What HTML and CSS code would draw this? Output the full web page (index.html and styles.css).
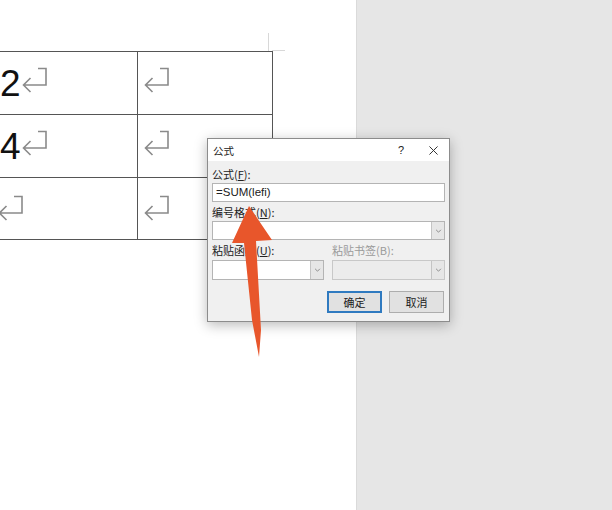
FILE: index.html
```html
<!DOCTYPE html>
<html lang="zh-CN">
<head>
  <meta charset="UTF-8">
  <title>公式</title>
  <link rel="stylesheet" href="styles.css">
</head>
<body>

  <div class="screen">
    <div class="doc">
      <div class="table-wrap">
        <table class="grid">
          <tr>
            <td class="col-a"><div class="cell"><span class="num">2</span><svg class="ret" viewBox="0 0 26 26"><path d="M16 1.5H24V18H1.5M8.5 11L1.5 18L8.5 25"/></svg></div></td>
            <td class="col-b"><div class="cell"><svg class="ret" viewBox="0 0 26 26"><path d="M16 1.5H24V18H1.5M8.5 11L1.5 18L8.5 25"/></svg></div></td>
          </tr>
          <tr>
            <td class="col-a"><div class="cell"><span class="num">4</span><svg class="ret" viewBox="0 0 26 26"><path d="M16 1.5H24V18H1.5M8.5 11L1.5 18L8.5 25"/></svg></div></td>
            <td class="col-b"><div class="cell"><svg class="ret" viewBox="0 0 26 26"><path d="M16 1.5H24V18H1.5M8.5 11L1.5 18L8.5 25"/></svg></div></td>
          </tr>
          <tr class="last">
            <td class="col-a"><div class="cell"><svg class="ret cut" viewBox="0 0 26 26"><path d="M16 1.5H24V18H1.5M8.5 11L1.5 18L8.5 25"/></svg></div></td>
            <td class="col-b"><div class="cell"><svg class="ret" viewBox="0 0 26 26"><path d="M16 1.5H24V18H1.5M8.5 11L1.5 18L8.5 25"/></svg></div></td>
          </tr>
        </table>
      </div>
    </div>
    <div class="side"></div>

    <div class="dialog">
      <div class="title-bar">
        <span class="title">公式</span>
        <span class="help">?</span>
        <svg class="close" viewBox="0 0 10 10"><path d="M0.5 0.5L9.5 9.5M9.5 0.5L0.5 9.5"/></svg>
      </div>
      <div class="body">
        <div class="label l1">公式(<u>F</u>):</div>
        <div class="field">=SUM(lefi)</div>
        <div class="label l2">编号格式(<u>N</u>):</div>
        <div class="combo">
          <span class="combo-text"></span>
          <span class="drop"><svg viewBox="0 0 8 5"><path d="M1 1L4 4L7 1"/></svg></span>
        </div>
        <div class="pair-labels">
          <div class="label">粘贴函数(<u>U</u>):</div>
          <div class="label off">粘贴书签(B):</div>
        </div>
        <div class="pair">
          <div class="combo">
            <span class="combo-text"></span>
            <span class="drop"><svg viewBox="0 0 8 5"><path d="M1 1L4 4L7 1"/></svg></span>
          </div>
          <div class="combo disabled">
            <span class="combo-text"></span>
            <span class="drop"><svg viewBox="0 0 8 5"><path d="M1 1L4 4L7 1"/></svg></span>
          </div>
        </div>
        <div class="buttons">
          <button class="btn default">确定</button>
          <button class="btn">取消</button>
        </div>
      </div>
    </div>

    <svg class="pointer" viewBox="0 0 612 510">
      <polygon points="249,206 272,240 256,241 261,330 259,357 252,320 244,243 232,243"/>
    </svg>
  </div>

</body>
</html>
```

FILE: styles.css
```css
body {
  margin: 0;
  font-family: "Liberation Sans", "Noto Sans CJK SC", sans-serif;
}

.screen {
  position: relative;
  display: flex;
  width: 612px;
  height: 510px;
  overflow: hidden;
}

.doc {
  width: 356px;
  background-color: #fff;
  padding-top: 51px;
}

.side {
  flex: 1;
  background-color: #e6e6e6;
  border-left: 1px solid #dadada;
}

.table-wrap {
  position: relative;
  width: 280px;
}

/* text boundary corner mark */
.table-wrap::before {
  content: "";
  position: absolute;
  left: 268px;
  top: -18px;
  width: 1px;
  height: 18px;
  background-color: #d8d8d8;
}

.table-wrap::after {
  content: "";
  position: absolute;
  left: 272px;
  top: -1px;
  width: 13px;
  height: 1px;
  background-color: #d8d8d8;
}

.grid {
  border-collapse: collapse;
  margin-left: -8px;
}

.grid td {
  border: 1px solid #555;
  height: 63px;
  padding: 13px 0 0 0;
  vertical-align: top;
  box-sizing: border-box;
}

.grid tr.last td {
  height: 62px;
  padding-top: 15px;
}

.col-a {
  width: 145px;
  padding-left: 7px !important;
}

.col-b {
  width: 135px;
  padding-left: 5px !important;
}

.cell {
  display: flex;
  align-items: flex-start;
}

.num {
  font-size: 37px;
  line-height: 37px;
  color: #111;
}

.ret {
  width: 26px;
  height: 26px;
  margin-top: 2px;
  margin-left: 1px;
}

.ret.cut {
  margin-left: -2px;
}

.ret path {
  fill: none;
  stroke: #8a8a8a;
  stroke-width: 1.6;
}

/* dialog */
.dialog {
  position: absolute;
  left: 207px;
  top: 138px;
  width: 243px;
  height: 184px;
  box-sizing: border-box;
  border: 1px solid #8c8c8c;
  background-color: #f0f0f0;
  box-shadow: 0 3px 12px rgba(0, 0, 0, 0.28);
  font-family: "Noto Sans CJK SC", "Liberation Sans", sans-serif;
  font-size: 11px;
  color: #222;
}

.title-bar {
  display: flex;
  align-items: center;
  height: 22px;
  padding: 0 11px 0 5px;
  background-color: #fff;
}

.title {
  flex: 1;
  font-size: 10.5px;
}

.help {
  font-family: "Liberation Sans", sans-serif;
  font-size: 11px;
  margin-right: 25px;
}

.close {
  width: 9px;
  height: 9px;
}

.close path {
  stroke: #333;
  stroke-width: 1.1;
}

.body {
  padding: 5px 4px 0 4px;
}

.label {
  height: 17px;
  line-height: 17px;
  white-space: nowrap;
}

.label u {
  text-underline-offset: 1px;
}

.label.l2 {
  height: 19px;
  line-height: 21px;
}

.label.off {
  color: #9a9a9a;
}

.field {
  height: 19px;
  box-sizing: border-box;
  border: 1px solid #b4b4b4;
  background-color: #fff;
  padding: 0 3px;
  line-height: 17px;
  font-family: "Liberation Sans", sans-serif;
  font-size: 11.5px;
}

.combo {
  display: flex;
  height: 19px;
  box-sizing: border-box;
  border: 1px solid #b4b4b4;
  background-color: #fff;
}

.combo-text {
  flex: 1;
}

.drop {
  display: flex;
  align-items: center;
  justify-content: center;
  width: 12px;
  background-color: #e6e6e6;
  border-left: 1px solid #c4c4c4;
}

.drop svg {
  width: 7px;
  height: 4px;
}

.drop path {
  fill: none;
  stroke: #777;
  stroke-width: 1;
}

.combo.disabled {
  background-color: #ececec;
  border-color: #c8c8c8;
}

.pair-labels, .pair {
  display: grid;
  grid-template-columns: 112px 113px;
  column-gap: 8px;
}

.pair-labels .label {
  height: 20px;
  line-height: 21px;
}

.pair .combo {
  height: 20px;
}

.buttons {
  display: flex;
  justify-content: flex-end;
  gap: 7px;
  margin-top: 11px;
  margin-right: 1px;
}

.btn {
  width: 55px;
  height: 22px;
  box-sizing: border-box;
  border: 1px solid #adadad;
  background-color: #e1e1e1;
  font-family: "Noto Sans CJK SC", sans-serif;
  font-size: 11px;
  color: #222;
  padding: 0;
}

.btn.default {
  border: 2px solid #2f7ac0;
}

.pointer {
  position: absolute;
  left: 0;
  top: 0;
  width: 612px;
  height: 510px;
  pointer-events: none;
}

.pointer polygon {
  fill: #e8562b;
}
```
